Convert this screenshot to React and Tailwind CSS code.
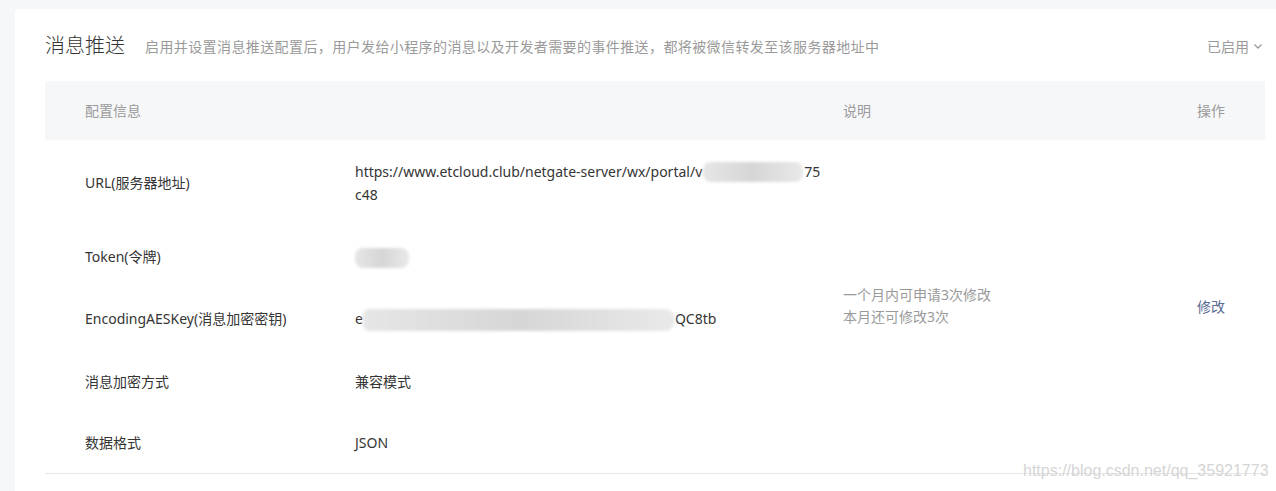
import React from "react";

const rows = [
  { label: "URL(服务器地址)", value: "url" },
  { label: "Token(令牌)", value: "token" },
  { label: "EncodingAESKey(消息加密密钥)", value: "aes" },
  { label: "消息加密方式", value: "兼容模式" },
  { label: "数据格式", value: "JSON" },
];

const Blur = ({ w, h = 20, className = "" }) => (
  <span
    className={`inline-block align-middle rounded-[8px] blur-[1.5px] bg-gradient-to-r from-[#e6e6e6] via-[#d6d6d6] to-[#e9e9e9] ${className}`}
    style={{ width: w, height: h }}
  />
);

const Value = ({ v }) => {
  if (v === "url")
    return (
      <span>
        https://www.etcloud.club/netgate-server/wx/portal/v
        <Blur w={100} className="mx-[1px] -mt-[2px]" />
        75
        <br />
        c48
      </span>
    );
  if (v === "token") return <Blur w={54} />;
  if (v === "aes")
    return (
      <span>
        e
        <Blur w={312} h={22} className="rounded-r-[14px]" />
        QC8tb
      </span>
    );
  return v;
};

export default function App() {
  return (
    <div
      className="min-h-[491px] bg-[#f6f7f9] pl-[15px] pt-[9px] overflow-hidden relative"
      style={{ fontFamily: '"Noto Sans", "Noto Sans CJK SC", sans-serif' }}
    >
      <div className="bg-white rounded-tl-[4px] pl-[30px] pr-[11px] h-[482px]">
        {/* header */}
        <div className="flex items-center h-[72px] pt-[2px]">
          <h2 className="text-[20px] leading-[28px] text-[#353535] font-light">消息推送</h2>
          <p className="ml-[20px] text-[14px] tracking-[0.4px] text-[#9a9a9a] pt-[1px]">
            启用并设置消息推送配置后，用户发给小程序的消息以及开发者需要的事件推送，都将被微信转发至该服务器地址中
          </p>
          <div className="ml-auto flex items-center gap-[4px] text-[14px] text-[#9a9a9a] pr-[2px]">
            已启用
            <svg width="10" height="10" viewBox="0 0 10 10" fill="none" stroke="#9a9a9a" strokeWidth="1.3">
              <path d="M1.5 3.5 L5 7 L8.5 3.5" />
            </svg>
          </div>
        </div>

        {/* table */}
        <table className="w-[1220px] table-fixed border-collapse text-[14px] leading-[23px] text-[#353535]">
          <colgroup>
            <col className="w-[310px]" />
            <col className="w-[488px]" />
            <col className="w-[354px]" />
            <col className="w-[68px]" />
          </colgroup>
          <thead>
            <tr className="bg-[#f6f7f9] text-[#9a9a9a] h-[59px] text-left">
              <th className="font-normal pl-[40px]">配置信息</th>
              <th></th>
              <th className="font-normal">说明</th>
              <th className="font-normal">操作</th>
            </tr>
          </thead>
          <tbody className="border-b border-[#e7e7eb]">
            {rows.map((r, i) => {
              const py = i < 3 ? "py-[19.5px]" : "py-[19px]";
              return (
                <tr key={r.label}>
                  <td className={`pl-[40px] ${py}`}>{r.label}</td>
                  <td className={`pr-[16px] break-all ${py}`}>
                    <Value v={r.value} />
                  </td>
                  {i === 0 && (
                    <>
                      <td rowSpan={5} className="align-middle text-[#9a9a9a] leading-[22px]">
                        一个月内可申请3次修改
                        <br />
                        本月还可修改3次
                      </td>
                      <td rowSpan={5} className="align-middle">
                        <a className="text-[#576b95] cursor-pointer">修改</a>
                      </td>
                    </>
                  )}
                </tr>
              );
            })}
          </tbody>
        </table>
      </div>

      {/* watermark */}
      <div
        className="absolute left-[1023px] top-[459px] text-[16px] text-[#d5d5d5]"
        style={{ fontFamily: '"Liberation Sans", Arial, sans-serif' }}
      >
        https://blog.csdn.net/qq_35921773
      </div>
    </div>
  );
}
